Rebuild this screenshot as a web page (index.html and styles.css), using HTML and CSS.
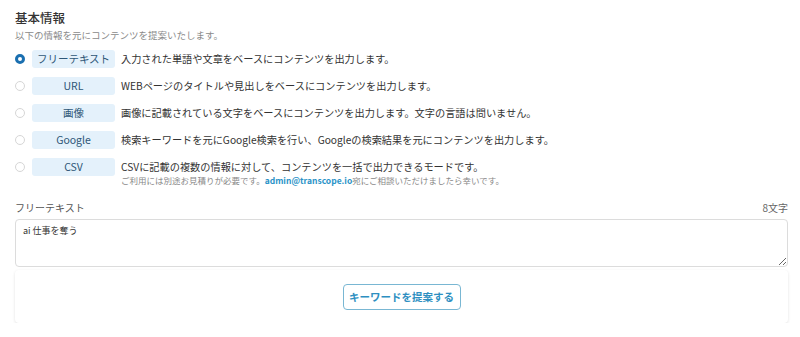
FILE: index.html
```html
<!DOCTYPE html>
<html lang="ja">
<head>
<meta charset="utf-8">
<link rel="stylesheet" href="styles.css">
</head>
<body>
<div class="page">
  <h2 class="title">基本情報</h2>
  <p class="sub">以下の情報を元にコンテンツを提案いたします。</p>
  <ul class="options">
    <li class="opt">
      <span class="radio checked"></span>
      <span class="badge">フリーテキスト</span>
      <span class="desc">入力された単語や文章をベースにコンテンツを出力します。</span>
    </li>
    <li class="opt">
      <span class="radio"></span>
      <span class="badge">URL</span>
      <span class="desc">WEBページのタイトルや見出しをベースにコンテンツを出力します。</span>
    </li>
    <li class="opt">
      <span class="radio"></span>
      <span class="badge">画像</span>
      <span class="desc">画像に記載されている文字をベースにコンテンツを出力します。文字の言語は問いません。</span>
    </li>
    <li class="opt">
      <span class="radio"></span>
      <span class="badge">Google</span>
      <span class="desc">検索キーワードを元にGoogle検索を行い、Googleの検索結果を元にコンテンツを出力します。</span>
    </li>
    <li class="opt top">
      <span class="radio"></span>
      <span class="badge">CSV</span>
      <span class="desc">CSVに記載の複数の情報に対して、コンテンツを一括で出力できるモードです。<span class="note">ご利用には別途お見積りが必要です。<a class="mail">admin@transcope.io</a>宛にご相談いただけましたら幸いです。</span></span>
    </li>
  </ul>
  <div class="field-head">
    <span class="label">フリーテキスト</span>
    <span class="count">8文字</span>
  </div>
  <textarea class="ta">ai 仕事を奪う</textarea>
  <div class="card">
    <button class="btn">キーワードを提案する</button>
  </div>
</div>
</body>
</html>
```

FILE: styles.css
```css
html, body { margin: 0; padding: 0; background: #fff; }
body { font-family: "Noto Sans CJK JP", "Noto Sans", sans-serif; color: #333; }
.page { padding: 9px 12px 0 15px; }
.title { margin: 0; font-size: 12.5px; font-weight: 500; line-height: 18px; color: #333; }
.sub { margin: 1px 0 0; font-size: 9.5px; line-height: 14px; color: #8a8a8a; }
.options { list-style: none; margin: 8px 0 0; padding: 0; }
.opt { display: flex; align-items: center; height: 18px; margin-bottom: 9px; }
.opt.top { align-items: flex-start; margin-bottom: 0; }
.radio { width: 10px; height: 10px; border: 1px solid #d6d6d6; border-radius: 50%; box-sizing: border-box; margin: 0 7px 0 0; flex: none; }
.opt.top .radio { margin-top: 4px; }
.radio.checked { border: 3px solid #1a6fb0; }
.badge { flex: none; width: 83px; height: 18px; box-sizing: border-box; background: #e4f1fb; border-radius: 3px; color: #2e5677; font-size: 10.5px; line-height: 18px; text-align: center; margin-right: 6px; }
.desc { font-size: 10.2px; line-height: 18px; color: #333; white-space: nowrap; }
.note { display: block; font-size: 8.5px; line-height: 12px; color: #888; margin-top: -2px; }
.mail { color: #2b93c8; font-weight: 700; }
.field-head { display: flex; justify-content: space-between; margin-top: 25px; font-size: 10px; line-height: 14px; color: #555; }
.count { color: #666; }
.ta { display: block; box-sizing: border-box; width: 100%; height: 48px; margin-top: 4px; border: 1px solid #dcdcdc; border-radius: 4px; padding: 5px 7px; font-family: inherit; font-size: 9px; line-height: 12px; color: #333; resize: vertical; }
.card { margin-top: 3px; height: 53px; background: #fff; border-radius: 4px; box-shadow: 0 1px 3px rgba(0,0,0,0.12); display: flex; justify-content: center; align-items: center; }
.btn { width: 118px; height: 26px; padding: 0; white-space: nowrap; border: 1px solid #79b7d3; border-radius: 4px; background: #fff; color: #2e8fc1; font-family: inherit; font-weight: 700; font-size: 10.5px; }
```
